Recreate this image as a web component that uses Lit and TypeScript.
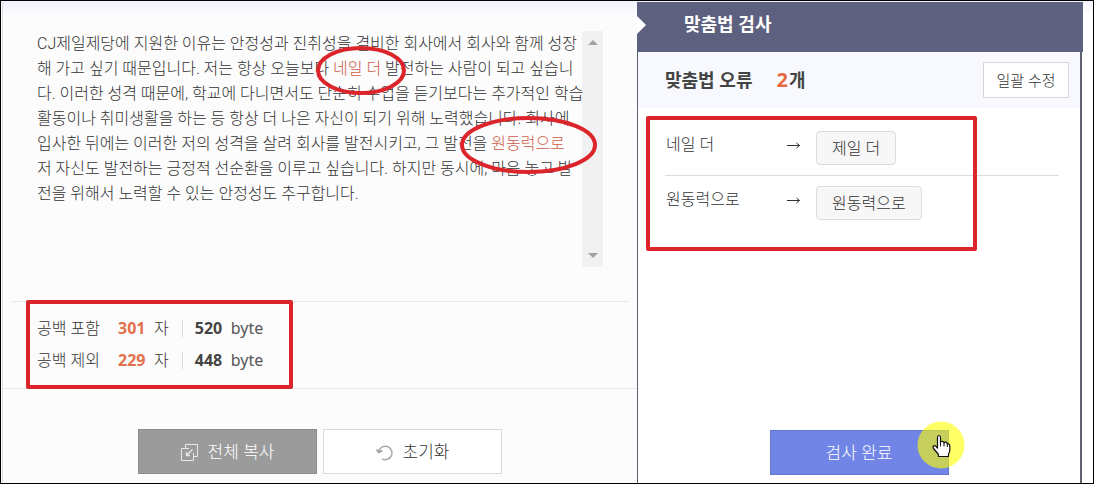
import { LitElement, html, css, svg } from "lit";
import { customElement, property, state } from "lit/decorators.js";

interface Correction {
  wrong: string;
  right: string;
}

interface CountRow {
  label: string;
  chars: number;
  bytes: number;
}

const fonts = css`
  :host {
    font-family: "Noto Sans", "Noto Sans CJK KR", sans-serif;
    font-weight: 300;
    color: #333;
  }
  button {
    font-family: inherit;
    font-weight: inherit;
    color: inherit;
    margin: 0;
    padding: 0;
    box-sizing: border-box;
    cursor: pointer;
  }
`;

@customElement("essay-text")
class EssayText extends LitElement {
  static styles = [
    fonts,
    css`
      :host {
        display: grid;
        grid-template-columns: minmax(0, 1fr) 21px;
        height: 236px;
      }
      .text {
        margin: 0;
        font-family: Roboto, "Noto Sans CJK KR", sans-serif;
        font-size: 16px;
        line-height: 25px;
        white-space: nowrap;
        position: relative;
        z-index: 1;
      }
      .wrong {
        position: relative;
        color: #cf5a48;
      }
      .ring {
        position: absolute;
        overflow: visible;
        pointer-events: none;
      }
      .small {
        left: -17px;
        top: -13px;
      }
      .large {
        left: -31px;
        top: -18px;
      }
      .bar {
        display: flex;
        flex-direction: column;
        justify-content: space-between;
        background: #f1f1f1;
      }
      .arrow {
        height: 23px;
        border: 0;
        background: none;
        display: grid;
        place-items: center;
      }
    `,
  ];

  private ring(kind: string, w: number, h: number) {
    return svg`<svg class="ring ${kind}" width=${w} height=${h} aria-hidden="true">
      <ellipse cx=${w / 2} cy=${h / 2} rx=${w / 2 - 2} ry=${h / 2 - 2} fill="none" stroke="#dc242b" stroke-width="4"/>
    </svg>`;
  }

  render() {
    return html`
      <p class="text">
        CJ제일제당에 지원한 이유는 안정성과 진취성을 겸비한 회사에서 회사와 함께 성장<br />해 가고 싶기 때문입니다. 저는 항상 오늘보다 <span class="wrong">네일 더${this.ring("small", 90, 49)}</span> 발전하는 사람이 되고 싶습니<br />다. 이러한 성격 때문에, 학교에 다니면서도 단순히 수업을 듣기보다는 추가적인 학습<br />활동이나 취미생활을 하는 등 항상 더 나은 자신이 되기 위해 노력했습니다. 회사에<br />입사한 뒤에는 이러한 저의 성격을 살려 회사를 발전시키고, 그 발전을 <span class="wrong">원동럭으로${this.ring("large", 137, 58)}</span><br />저 자신도 발전하는 긍정적 선순환을 이루고 싶습니다. 하지만 동시에, 마음 놓고 발<br />전을 위해서 노력할 수 있는 안정성도 추구합니다.
      </p>
      <div class="bar">
        <button class="arrow" aria-label="위로">
          <svg width="10" height="5"><path d="M0 5L5 0L10 5Z" fill="#a3a3a3" /></svg>
        </button>
        <button class="arrow" aria-label="아래로">
          <svg width="10" height="5"><path d="M0 0L5 5L10 0Z" fill="#a3a3a3" /></svg>
        </button>
      </div>
    `;
  }
}

@customElement("count-panel")
class CountPanel extends LitElement {
  @property({ attribute: false }) rows: CountRow[] = [];

  static styles = [
    fonts,
    css`
      :host {
        display: block;
        position: relative;
        padding: 10px 0 12px 34px;
        border-bottom: 1px solid #e8e8e8;
      }
      :host::before {
        content: "";
        position: absolute;
        top: -1px;
        left: 9px;
        right: 8px;
        height: 1px;
        background: #e8e8e8;
      }
      .row {
        display: flex;
        align-items: center;
        height: 32px;
        font-size: 16px;
        line-height: 32px;
      }
      .label {
        width: 81px;
      }
      .num {
        font-weight: 700;
        color: #444;
        width: 28px;
        margin-right: 8px;
      }
      .chars {
        color: #e2704a;
      }
      .rule {
        width: 1px;
        height: 17px;
        background: #d8d8d8;
        margin: 0 12px 0 13px;
      }
      .unit {
        font-weight: 400;
        color: #555;
      }
      .mark {
        position: absolute;
        box-sizing: border-box;
        left: 23px;
        top: -2px;
        width: 267px;
        bottom: -1px;
        border: 4px solid #dc242b;
        border-radius: 2px;
        pointer-events: none;
      }
    `,
  ];

  render() {
    return html`
      ${this.rows.map(
        (r) => html`<div class="row">
          <span class="label">${r.label}</span>
          <span class="num chars">${r.chars}</span>
          <span>자</span>
          <span class="rule"></span>
          <span class="num">${r.bytes}</span>
          <span class="unit">byte</span>
        </div>`
      )}
      <div class="mark"></div>
    `;
  }
}

@customElement("result-panel")
class ResultPanel extends LitElement {
  @property({ attribute: false }) items: Correction[] = [];

  static styles = [
    fonts,
    css`
      :host {
        display: flex;
        flex-direction: column;
        background: #fff;
      }
      .title {
        position: relative;
        margin: 0;
        padding-left: 47px;
        background: #5e6080;
        color: #fff;
        font-size: 18px;
        line-height: 44px;
        padding-bottom: 6px;
        font-weight: 700;
      }
      .title::before {
        content: "";
        position: absolute;
        left: 0;
        top: 14px;
        border: 9px solid transparent;
        border-left-color: #fff;
        border-right-width: 0;
      }
      .body {
        flex: 1;
        display: flex;
        flex-direction: column;
        border-left: 1px solid #5f606f;
        border-right: 2px solid #5f606f;
        margin-right: 1px;
      }
      .summary {
        display: flex;
        align-items: center;
        height: 56px;
        padding: 0 11px 0 27px;
        background: #f8f9fe;
      }
      .heading {
        margin: 0;
        font-size: 18px;
        line-height: 28px;
        font-weight: 700;
        color: #444;
        flex: 1;
      }
      .total {
        color: #e8693f;
        font-size: 20px;
        margin: 0 1px 0 24px;
      }
      .all {
        width: 86px;
        height: 36px;
        border: 1px solid #d6d6d6;
        background: #fff;
        font-size: 15px;
        padding-bottom: 2px;
      }
      .fixes {
        position: relative;
        margin: 13px 0 0;
        padding: 0 21px 0 27px;
      }
      .list {
        list-style: none;
        margin: 0;
        padding: 0;
      }
      .item {
        display: grid;
        grid-template-columns: 121px 30px auto;
        justify-content: start;
        align-items: start;
        padding: 10px 0;
        font-size: 16px;
        line-height: 26px;
      }
      .item + .item {
        border-top: 1px solid #dcdcdc;
      }
      .word {
        padding-left: 1px;
      }
      .to {
        padding-top: 10px;
        display: block;
      }
      .fix {
        height: 34px;
        padding: 0 15px;
        border: 1px solid #dcdcdc;
        border-radius: 4px;
        background: #f7f7f7;
        font-size: 16px;
        line-height: 30px;
      }
      .mark {
        position: absolute;
        box-sizing: border-box;
        left: 8px;
        top: -5px;
        width: 331px;
        height: 135px;
        border: 4px solid #dc242b;
        border-radius: 2px;
        pointer-events: none;
      }
      .foot {
        margin-top: auto;
        padding-bottom: 8px;
        display: flex;
        justify-content: center;
      }
      .done {
        position: relative;
        width: 179px;
        height: 45px;
        border: 1px solid #6478d2;
        background: #7185e6;
        color: #fff;
        font-size: 17px;
        padding-bottom: 2px;
      }
      .pointer {
        position: absolute;
        left: 146px;
        top: -10px;
        overflow: visible;
      }
    `,
  ];

  render() {
    return html`
      <h2 class="title">맞춤법 검사</h2>
      <div class="body">
        <div class="summary">
          <h3 class="heading">맞춤법 오류<span class="total">${this.items.length}</span>개</h3>
          <button class="all">일괄 수정</button>
        </div>
        <div class="fixes">
          <ul class="list">
            ${this.items.map(
              (i) => html`<li class="item">
                <span class="word">${i.wrong}</span>
                <svg class="to" width="15" height="9" viewBox="0 0 15 9" aria-hidden="true">
                  <path d="M1 4.5H13.5M10.500 2L13.5 4.5L10.500 7" fill="none" stroke="#333" />
                </svg>
                <button class="fix">${i.right}</button>
              </li>`
            )}
          </ul>
          <div class="mark"></div>
        </div>
        <div class="foot">
          <button class="done">
            검사 완료
            <svg class="pointer" width="48" height="48" viewBox="0 0 48 48" aria-hidden="true">
              <circle cx="24" cy="24" r="23.5" fill="#ffff00" fill-opacity=".6" />
              <path
                d="M20.5 16.5Q20.5 14.5 22 14.5Q23.500 14.500 23.500 16.500V21.500Q24 20 25.500 20.300Q27 20.500 27 22Q27.500 20.800 29 21.200Q30.300 21.500 30.300 23Q32.800 22.400 32.800 25V29Q32.800 31.500 31.500 33V35.500H21.500V33.500L16.500 27.500Q15.500 25.500 16.800 24.800Q18.200 24.300 20.500 27Z"
                fill="#fff"
                stroke="#111"
                stroke-width="1.200"
                stroke-linejoin="round"
              />
              <path d="M23.500 21V25.500M27 22V25.500M30.300 23V26" stroke="#111" fill="none" />
            </svg>
          </button>
        </div>
      </div>
    `;
  }
}

@customElement("app-root")
class AppRoot extends LitElement {
  @state() private items: Correction[] = [
    { wrong: "네일 더", right: "제일 더" },
    { wrong: "원동럭으로", right: "원동력으로" },
  ];

  @state() private counts: CountRow[] = [
    { label: "공백 포함", chars: 301, bytes: 520 },
    { label: "공백 제외", chars: 229, bytes: 448 },
  ];

  static styles = [
    fonts,
    css`
      :host {
        display: grid;
        grid-template-columns: 635fr 446fr;
        box-sizing: border-box;
        min-height: 100vh;
        border: 1px solid #000;
        padding: 1px 10px 0 1px;
        background: linear-gradient(#f3f3fd, #fff 14px);
      }
      .left {
        display: flex;
        flex-direction: column;
        box-sizing: border-box;
        border-left: 1px solid #e4dfe4;
        background: linear-gradient(#f0f1fd, #fcfcfc 14px);
      }
      .essay {
        margin: 29px 34px 35px 34px;
      }
      .actions {
        margin-top: auto;
        padding-bottom: 9px;
        display: flex;
        justify-content: center;
        gap: 6px;
      }
      .btn {
        width: 179px;
        height: 45px;
        display: flex;
        align-items: center;
        justify-content: center;
        gap: 10px;
        font-size: 17px;
        padding-bottom: 2px;
        border: 1px solid #d9d9d9;
        background: #fff;
      }
      .copy {
        border-color: #8c8c8c;
        background: #9b9b9b;
        color: #fff;
      }
      .icon {
        margin-top: 4px;
      }
    `,
  ];

  render() {
    return html`
      <section class="left">
        <essay-text class="essay"></essay-text>
        <count-panel .rows=${this.counts}></count-panel>
        <div class="actions">
          <button class="btn copy">
            <svg class="icon" width="17" height="17" viewBox="0 0 17 17" fill="none" stroke="#e8e8e8" aria-hidden="true">
              <path d="M4.500 4V.5H16.500V12.500H13" />
              <path d="M8 4.500H.5V16.500H12.500V9" />
              <path d="M11.500 5.500L5.500 11.500M5.500 8V11.500H9" stroke-width="1.400" />
            </svg>
            전체 복사
          </button>
          <button class="btn">
            <svg class="icon" width="17" height="17" viewBox="0 0 17 17" fill="none" stroke="#aaa" aria-hidden="true">
              <path d="M2.700 7.500A6.700 6.700 0 1 1 6 14.800" stroke-width="1.500" />
              <path d="M.5 5.500L2.800 8.500L6.300 6.500" stroke="#999" stroke-width="1.500" />
            </svg>
            초기화
          </button>
        </div>
      </section>
      <result-panel .items=${this.items}></result-panel>
    `;
  }
}
